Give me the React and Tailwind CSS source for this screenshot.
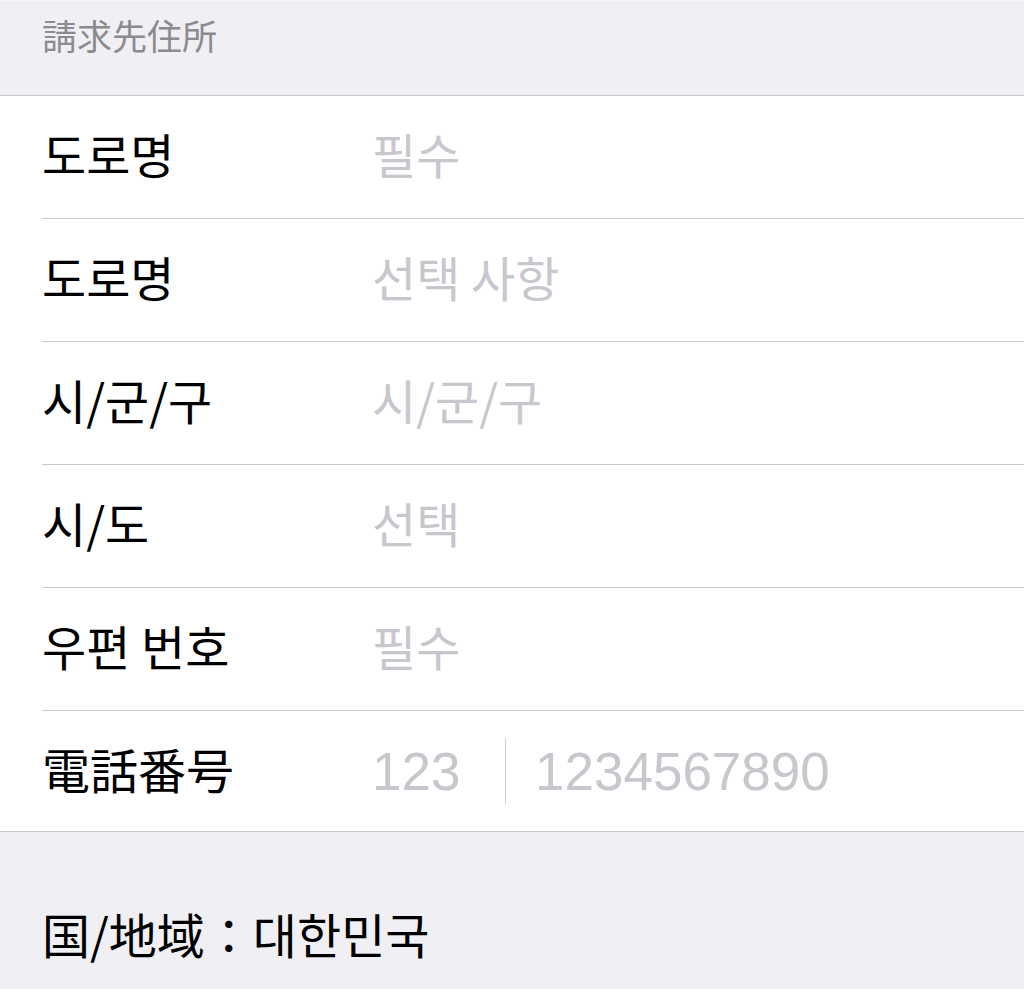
import React from 'react';

const rows = [
  { label: '도로명', placeholder: '필수' },
  { label: '도로명', placeholder: '선택 사항' },
  { label: '시/군/구', placeholder: '시/군/구' },
  { label: '시/도', placeholder: '선택' },
  { label: '우편 번호', placeholder: '필수' },
];

const font = { fontFamily: '"Noto Sans CJK KR", "Noto Sans CJK JP", sans-serif' };
const digits = { fontFamily: '"Liberation Sans", sans-serif' };

export default function App() {
  return (
    <div className="w-[1024px] h-[989px] bg-[#efeff4] overflow-hidden" style={font}>
      <div className="h-[95px] border-t border-[#f7f7fa] flex items-center pl-[42px] pb-[28px]">
        <span className="text-[35px] text-[#8a8a8f] leading-none">請求先住所</span>
      </div>

      <div className="bg-white border-y border-[#c8c7cc]">
        {rows.map((row, i) => (
          <div key={i}>
            <div className="h-[122px] flex items-center pl-[42px] pb-[8px]">
              <span className="w-[330px] text-[48px] text-black leading-none">{row.label}</span>
              <span className="text-[48px] text-[#c7c7cd] leading-none">{row.placeholder}</span>
            </div>
            <div className="ml-[42px] h-px bg-[#c8c7cc]" />
          </div>
        ))}
        <div className="h-[120px] flex items-center pl-[42px]">
          <span className="w-[330px] text-[48px] text-black leading-none pb-[6px]">電話番号</span>
          <span className="w-[133px] text-[53px] text-[#c7c7cd] leading-none" style={digits}>123</span>
          <div className="w-px h-[66px] bg-[#d1d1d6]" />
          <span className="ml-[29px] text-[53px] text-[#c7c7cd] leading-none" style={digits}>1234567890</span>
        </div>
      </div>

      <div className="pl-[42px] pt-[77px]">
        <span className="text-[48px] text-black leading-none">国/地域：대한민국</span>
      </div>
    </div>
  );
}
